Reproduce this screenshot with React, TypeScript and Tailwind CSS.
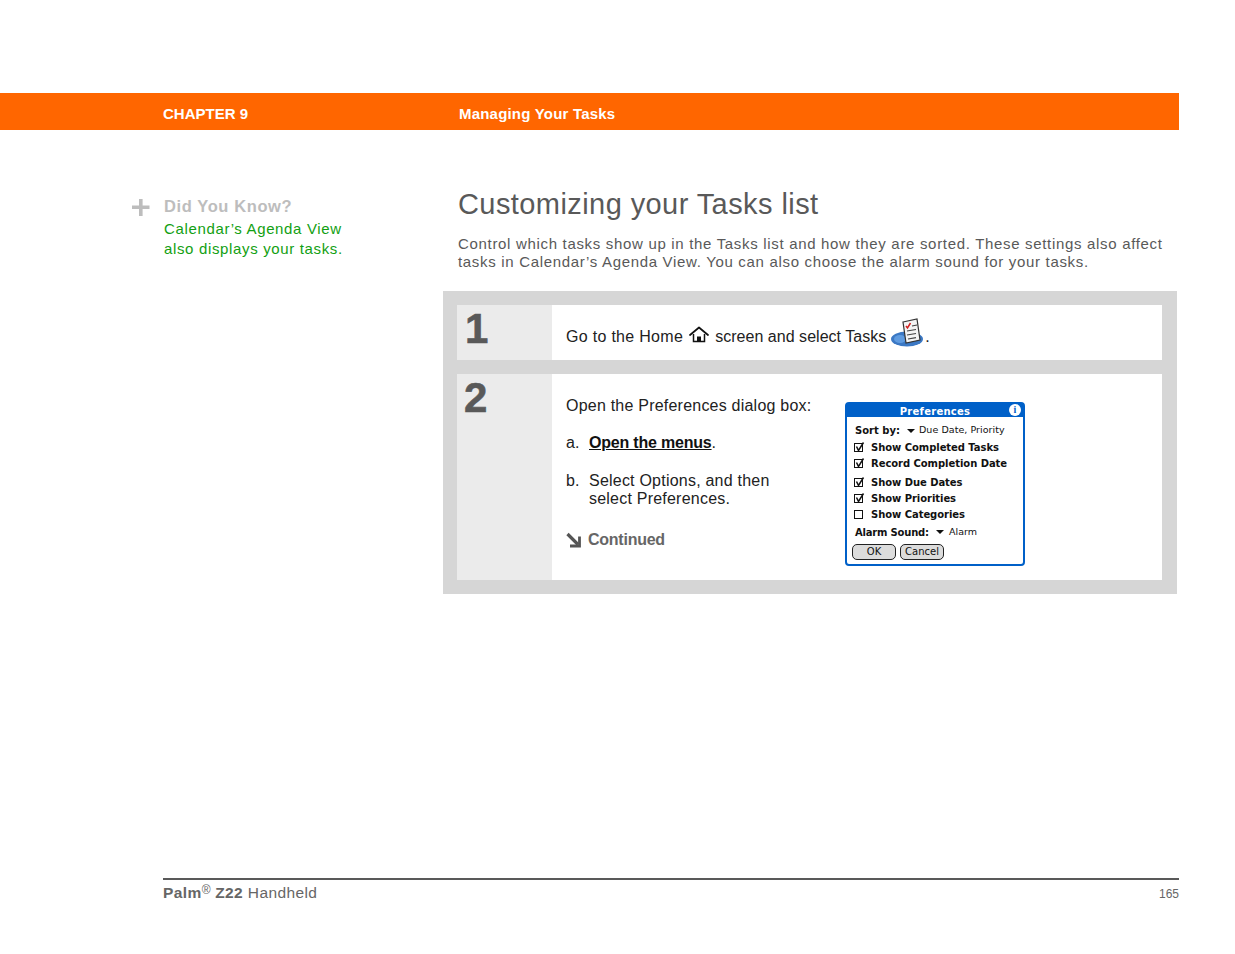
const sans = "font-['Liberation_Sans',Arial,sans-serif]";
const pixel = "font-['DejaVu_Sans',sans-serif]";

function Plus() {
  return (
    <svg width="18" height="17" viewBox="0 0 18 17" className="shrink-0">
      <path d="M0 6.6h17.5v3.4H0zM7 0h3.6v17H7z" fill="#bdbdbd" />
    </svg>
  );
}

function HomeIcon() {
  return (
    <svg width="20" height="18" viewBox="0 0 20 18" className="shrink-0">
      <path d="M1 9 10 1.5 19 9" fill="none" stroke="#111" strokeWidth="1.7" strokeLinecap="round" strokeLinejoin="round" />
      <path d="M4.5 8v7.5h11V8" fill="none" stroke="#111" strokeWidth="1.5" />
      <path d="M8 15.5v-5h4v5z" fill="#111" />
    </svg>
  );
}

function TasksIcon() {
  return (
    <svg width="34" height="30" viewBox="0 0 34 30" className="shrink-0">
      <ellipse cx="16" cy="21" rx="16" ry="7.5" fill="#3b78c4" />
      <ellipse cx="9" cy="21" rx="6" ry="4" fill="#5f9be0" />
      <path d="M12 4 26 1l3 21-14 3z" fill="#f4f4f4" stroke="#333" strokeWidth="1.2" />
      <path d="M15 8l1.5 2 3-5" fill="none" stroke="#d42020" strokeWidth="1.5" />
      <path d="M21 8l5-1M16 13l9-1.5M16 17l9-1.5M17 21l8-1.3" stroke="#444" strokeWidth="1.2" />
    </svg>
  );
}

function ContinuedArrow() {
  return (
    <svg width="16" height="16" viewBox="0 0 16 16" className="shrink-0">
      <path d="M1.5 2 12 12.5" stroke="#555" strokeWidth="3.2" fill="none" />
      <path d="M13.5 4.5v9.5H4" stroke="#555" strokeWidth="2.8" fill="none" />
    </svg>
  );
}

function Check({ on = true }: { on?: boolean }) {
  return (
    <svg width="11" height="11" viewBox="0 0 11 11" className="shrink-0 -ml-px">
      <rect x="0.5" y="1.5" width="8" height="8" fill="none" stroke="#111" strokeWidth="1" />
      {on && <path d="M2.5 4.5 4.5 8.5 9.5 0.5" fill="none" stroke="#111" strokeWidth="1.5" />}
    </svg>
  );
}

function Arrow() {
  return <span className="inline-block w-0 h-0 border-x-[4.5px] border-x-transparent border-t-[4.5px] border-t-[#111]" />;
}

function CheckRow({ label, on, className }: { label: string; on?: boolean; className?: string }) {
  return (
    <div className={`flex items-center gap-[6px] h-4 ${className ?? ""}`}>
      <Check on={on} />
      <span className="text-[10px] font-bold tracking-[-0.05px] text-[#111] whitespace-nowrap">{label}</span>
    </div>
  );
}

function Dialog() {
  return (
    <div className={`w-[180px] h-[164px] rounded-[4px] border-2 border-[#0060c8] bg-white flex flex-col ${pixel}`}>
      <div className="h-[14px] -mx-px -mt-px pt-[2px] bg-[#0060c8] rounded-t-[3px] flex items-center justify-center relative">
        <span className="text-[10px] font-bold tracking-[0.25px] text-white">Preferences</span>
        <span className="absolute right-[3px] top-[1px] w-3 h-3 rounded-full bg-white text-[#0060c8] text-[10px] leading-3 font-bold text-center font-['Liberation_Serif',serif]">i</span>
      </div>
      <div className="flex flex-col pl-[8px] pt-[7px]">
        <div className="flex items-center h-[13px] text-[10px] text-[#111] whitespace-nowrap">
          <span className="font-bold tracking-[0px] w-[52px]">Sort by:</span>
          <Arrow />
          <span className="ml-[4px] text-[9.5px] tracking-[0.05px]">Due Date, Priority</span>
        </div>
        <CheckRow label="Show Completed Tasks" on className="mt-[2px]" />
        <CheckRow label="Record Completion Date" on className="mt-[0.5px]" />
        <CheckRow label="Show Due Dates" on className="mt-[3px]" />
        <CheckRow label="Show Priorities" on />
        <CheckRow label="Show Categories" on={false} />
        <div className="flex items-center h-[13px] mt-[3px] text-[10px] text-[#111] whitespace-nowrap">
          <span className="font-bold tracking-[-0.2px] w-[81px]">Alarm Sound:</span>
          <Arrow />
          <span className="ml-[5px] text-[9.5px]">Alarm</span>
        </div>
        <div className="flex gap-[4px] mt-[5px] -ml-[3px]">
          <span className="w-[44px] h-[16px] rounded-[5px] border border-[#222] bg-[#dcdcdc] text-[10px] leading-[14px] text-center text-[#111]">OK</span>
          <span className="w-[44px] h-[16px] rounded-[5px] border border-[#222] bg-[#dcdcdc] text-[10px] leading-[14px] text-center text-[#111]">Cancel</span>
        </div>
      </div>
    </div>
  );
}

export default function App() {
  return (
    <div className={`w-[1235px] h-[954px] bg-white flex flex-col overflow-hidden ${sans}`}>
      <header className="mt-[93px] h-[37px] w-[1179px] bg-[#ff6600] flex items-center text-white font-bold text-[15px] pl-[163px] pt-[5px]">
        <span className="w-[296px]">CHAPTER 9</span>
        <span className="tracking-[0.2px]">Managing Your Tasks</span>
      </header>

      <main className="flex mt-[57px] h-[408px]">
        <aside className="w-[443px] shrink-0 pl-[132px] pt-[9px]">
          <div className="flex items-start gap-[14px]">
            <div className="pt-[3px]"><Plus /></div>
            <div>
              <div className="text-[16.5px] leading-[20px] font-bold tracking-[0.6px] text-[#bdbdbd]">Did You Know?</div>
              <div className="mt-[3px] text-[15px] leading-[20px] tracking-[0.65px] text-[#12a012]">
                <div>Calendar’s Agenda View</div>
                <div>also displays your tasks.</div>
              </div>
            </div>
          </div>
        </aside>

        <section className="w-[734px] shrink-0">
          <div className="pl-[15px]">
            <h1 className="text-[29px] leading-[34px] tracking-[0.42px] text-[#595959]">Customizing your Tasks list</h1>
            <p className="mt-[14px] text-[15px] leading-[18px] tracking-[0.68px] text-[#595959] whitespace-nowrap">
              Control which tasks show up in the Tasks list and how they are sorted. These settings also affect<br />
              tasks in Calendar’s Agenda View. You can also choose the alarm sound for your tasks.
            </p>
          </div>

          <div className="mt-[20px] bg-[#d6d6d6] p-[14px] pr-[15px] flex flex-col gap-[14px]">
            <div className="flex h-[55px] bg-white">
              <div className="w-[95px] bg-[#ebebeb] pl-[8px] pt-[1px] text-[42px] leading-[46px] font-bold text-[#595959] [-webkit-text-stroke:0.6px_#595959]">1</div>
              <div className="flex items-center pl-[14px] pt-[9px] text-[16px] text-[#222] whitespace-nowrap">
                <span className="tracking-[0.3px]">Go to the Home</span>
                <span className="ml-[6px] -mt-[5px]"><HomeIcon /></span>
                <span className="ml-[6px] tracking-[0.03px]">screen and select Tasks</span>
                <span className="ml-[5px] -mt-[9px]"><TasksIcon /></span>
                <span>.</span>
              </div>
            </div>

            <div className="flex h-[206px] bg-white">
              <div className="w-[95px] bg-[#ebebeb] pl-[7px] pt-[1px] text-[42px] leading-[46px] font-bold text-[#595959] [-webkit-text-stroke:0.6px_#595959]">2</div>
              <div className="w-[293px] pl-[14px] pt-[23px] text-[16px] leading-[18px] tracking-[0.22px] text-[#222]">
                <div className="whitespace-nowrap">Open the Preferences dialog box:</div>
                <div className="mt-[19px] flex">
                  <span className="w-[23px]">a.</span>
                  <span><a className="font-bold underline text-[#111] tracking-[-0.2px]">Open the menus</a>.</span>
                </div>
                <div className="mt-[20px] flex">
                  <span className="w-[23px]">b.</span>
                  <span className="whitespace-nowrap">Select Options, and then<br />select Preferences.</span>
                </div>
                <div className="mt-[23px] flex items-center gap-[6px] font-bold text-[#666] tracking-[-0.25px]">
                  <ContinuedArrow />
                  <span>Continued</span>
                </div>
              </div>
              <div className="pt-[28px]">
                <Dialog />
              </div>
            </div>
          </div>
        </section>
      </main>

      <footer className="mt-[283px] ml-[163px] w-[1016px] border-t-2 border-[#595959] pt-[3px] flex items-start justify-between text-[#666]">
        <div className="text-[15.5px] leading-[20px] tracking-[0.4px]">
          <b>Palm<sup className="text-[12px] font-normal tracking-[0px] -top-[0.3em]">®</sup> Z22</b> Handheld
        </div>
        <div className="text-[12px] leading-[20px] pt-[1px]">165</div>
      </footer>
    </div>
  );
}
